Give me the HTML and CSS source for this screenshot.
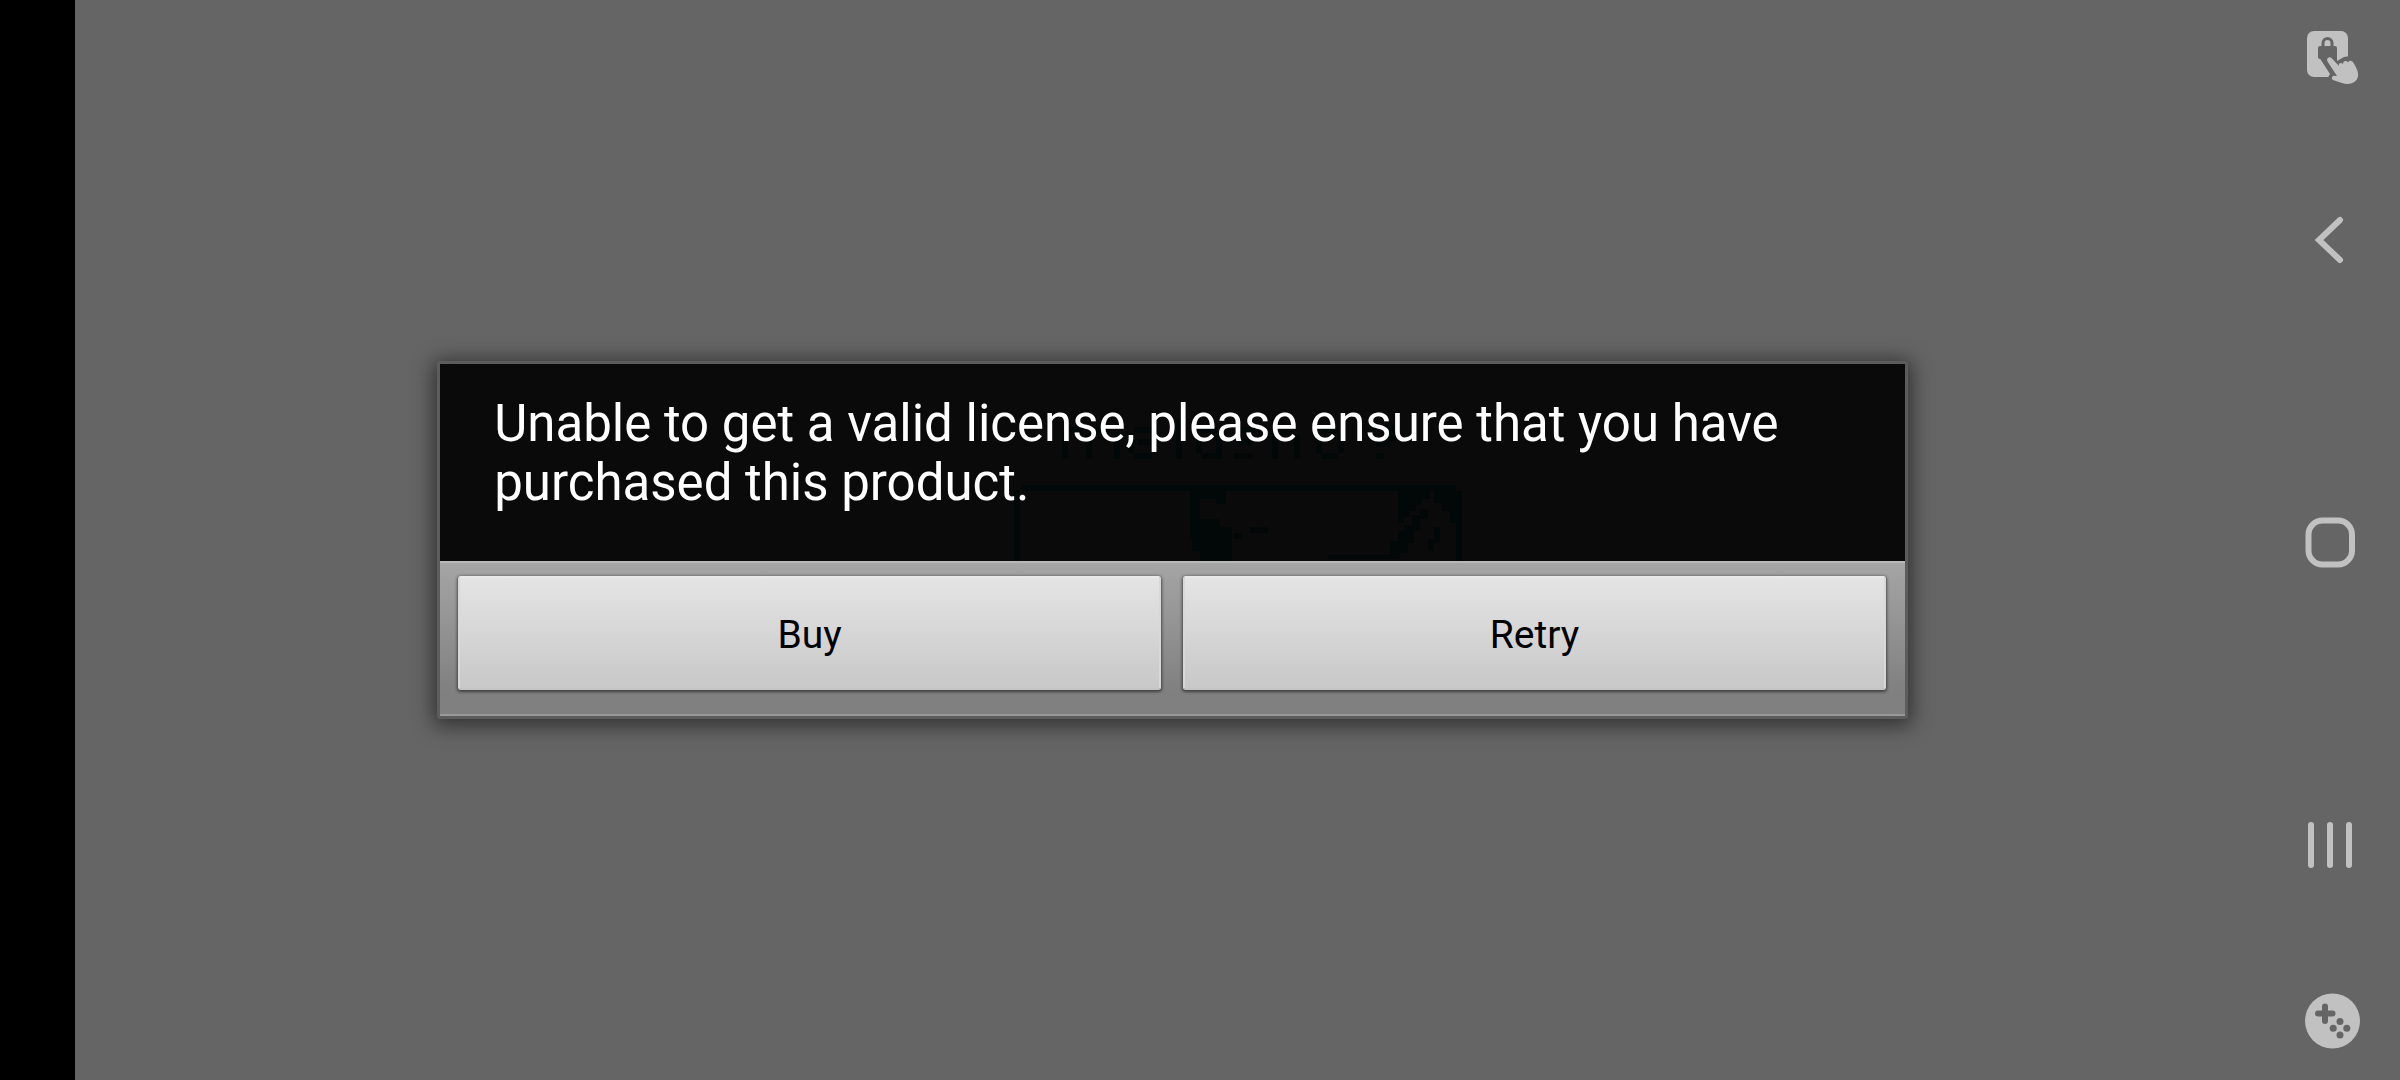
FILE: index.html
```html
<!DOCTYPE html>
<html lang="en">
<head>
    <meta charset="UTF-8">
    <meta name="viewport" content="width=device-width, initial-scale=1.0">
    <title>License check</title>
    <link rel="stylesheet" href="styles.css">
</head>
<body>
    <div class="cutout"></div>

    <main class="screen">
        <div class="dialog" role="alertdialog" aria-labelledby="message">
            <div class="message">
                <!-- app screen showing faintly through the dialog -->
                <svg class="ghost" viewBox="0 0 470 142" aria-hidden="true">
                    <path d="M4 71H10V142H4ZM12 66H446V72H12ZM446 72H452V142H446Z"/>
                    <path d="M180 72H216V85H206V80H190V100H210V108H222V142H190V132H182V120H180ZM240 108H258V114H240ZM224 114H232V120H224Z"/>
                    <path d="M388 72H420V80H412V86H406V92H400V98H394V104H388ZM424 72H446V104H440V92H432V84H424ZM394 106H402V96H410V90H418V100H410V112H404V124H398V134H390V140H318V136H380V122H388V112H394ZM418 120H424V108H430V124H424V132H418Z"/>
                    <path d="M52 14H58V40H52ZM60 8H72V14H60ZM76 14H82V40H76ZM84 8H100V14H84ZM104 14H110V40H104ZM124 8H142V14H124ZM118 14H124V34H118ZM124 34H142V40H124ZM128 20H146V26H128ZM166 0H172V40H166ZM190 8H208V14H190ZM186 18H192V34H186ZM192 34H206V40H192ZM206 14H212V40H206ZM226 8H246V14H226ZM226 20H242V26H226ZM224 34H242V40H224ZM262 0H268V40H262ZM270 10H282V16H270ZM284 16H290V40H284ZM312 8H328V14H312ZM306 14H312V34H306ZM312 34H328V40H312ZM328 14H334V34H328ZM360 6H384V12H360ZM378 12H386V22H378ZM366 22H380V28H366ZM366 34H374V40H366Z"/>
                </svg>
                <p id="message">Unable to get a valid license, please ensure that you have purchased this product.</p>
            </div>
            <div class="buttons">
                <button type="button">Buy</button>
                <button type="button">Retry</button>
            </div>
        </div>
    </main>

    <nav class="navbar">
        <button type="button" aria-label="Touch lock">
            <svg viewBox="0 0 60 60">
                <rect class="fill" x="7" y="3" width="41" height="46" rx="7"/>
                <path class="hole-line" d="M23 20V15a4.500 4.500 0 0 1 9 0V20"/>
                <rect class="hole" x="18" y="18" width="19" height="13" rx="2"/>
                <path class="hole" d="M19 29L30 46L27 51L50 52V28L44 29L37 33V29Z"/>
                <path class="fill" d="M27.500 33.500C26 31 29 28 31.500 30L39 38C38 35 41 34 43 36C43 33 46 32 48 34.500C49 32 52 32 53.500 35C58 42 60 48 56 52.500C53 56 47 57 42 55L33 52C31 51 32 47 35 48L37 48Z"/>
            </svg>
        </button>
        <div class="keys">
            <button type="button" aria-label="Back">
                <svg viewBox="0 0 60 60"><path class="line" d="M40 10L19 30L40 50"/></svg>
            </button>
            <button type="button" aria-label="Home">
                <svg viewBox="0 0 60 60"><rect class="line" x="8.500" y="7.500" width="43.500" height="44" rx="14"/></svg>
            </button>
            <button type="button" aria-label="Recent apps">
                <svg viewBox="0 0 60 60"><path class="line" d="M11 10V50M30 10V50M49 10V50"/></svg>
            </button>
        </div>
        <button type="button" aria-label="Game tools">
            <svg viewBox="0 0 60 60">
                <circle class="fill" cx="32.500" cy="30" r="27.500"/>
                <path class="hole-cross" d="M25 15.500V30M18 22.500H32.500"/>
                <circle class="hole" cx="40" cy="30.500" r="3.500"/>
                <circle class="hole" cx="33.200" cy="37.200" r="3.500"/>
                <circle class="hole" cx="46.800" cy="37.200" r="3.500"/>
                <circle class="hole" cx="40" cy="44" r="3.500"/>
            </svg>
        </button>
    </nav>
</body>
</html>
```
FILE: styles.css
```css
* {
    box-sizing: border-box;
}

body {
    display: flex;
    height: 100vh;
    margin: 0;
    background: #656565;
    font-family: Roboto, sans-serif;
    overflow: hidden;
}

.cutout {
    width: 75px;
    background: #000;
}

.screen {
    flex: 1;
    display: flex;
    align-items: center;
    justify-content: center;
}

.dialog {
    width: 67%;
    border: 3px solid #5c5c5c;
    border-radius: 4px;
    box-shadow: 0 3px 20px 4px rgba(0, 0, 0, 0.5);
}

.message {
    position: relative;
    padding: 30px 54px 49px;
    background: #0a0a0a;
    color: #fff;
}

.message p {
    position: relative;
    margin: 0;
    font-size: 51px;
    line-height: 59px;
}

.ghost {
    position: absolute;
    bottom: 0;
    left: 570px;
    width: 470px;
    fill: #020708;
}

.buttons {
    display: flex;
    gap: 22px;
    padding: 13px 19px 24px 18px;
    border-top: 2px solid #b8b8b8;
    border-bottom: 2px solid #999;
    background: linear-gradient(#a5a5a5, #808080 85%);
}

.buttons button {
    flex: 1;
    height: 114px;
    padding: 4px 0 0;
    border: 2px solid;
    border-color: #eaeaea #d8d8d8 #c4c4c4;
    border-radius: 3px;
    background: linear-gradient(#e4e4e4, #c8c8c8);
    box-shadow: 0 1px 3px 1px rgba(0, 0, 0, 0.5);
    color: #000;
    font-family: inherit;
    font-size: 39px;
}

.navbar {
    display: flex;
    flex-direction: column;
    width: 130px;
    padding: 28px 40px 29px 30px;
}

.navbar button {
    display: block;
    padding: 0;
    border: 0;
    background: none;
}

.navbar svg {
    display: block;
    width: 60px;
    height: 60px;
}

.keys {
    flex: 1;
    display: flex;
    flex-direction: column;
    justify-content: space-between;
    margin: 122px 0 116px;
}

.fill {
    fill: #c1c1c1;
}

.hole {
    fill: #656565;
}

.line {
    fill: none;
    stroke: #c1c1c1;
    stroke-width: 6;
    stroke-linecap: round;
}

.hole-line {
    fill: none;
    stroke: #656565;
    stroke-width: 3;
}

.hole-cross {
    stroke: #656565;
    stroke-width: 6;
    stroke-linecap: round;
}
```
